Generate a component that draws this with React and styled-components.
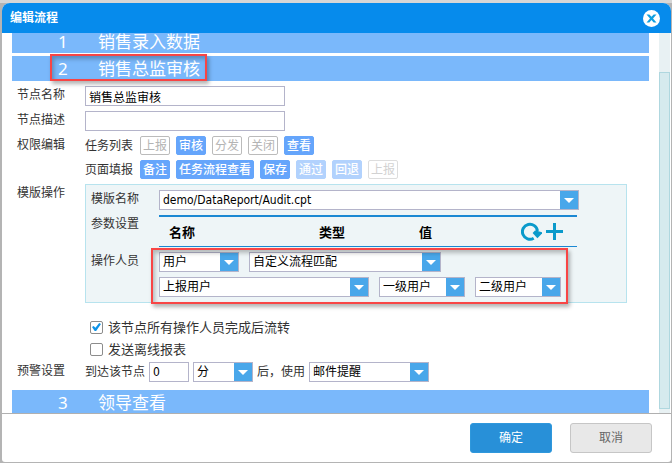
import React from 'react'
import styled, { createGlobalStyle } from 'styled-components'

const GlobalStyle = createGlobalStyle`
*, *::before, *::after{
  box-sizing: border-box;
}
body{
  margin: 0;
  background: #b4b4b4;
  color: #333;
  font-family: "Noto Sans", "Noto Sans CJK SC", sans-serif;
  font-size: 12px;
  line-height: 18px;
}
button, input, select{
  margin: 0;
  font: inherit;
}
`

const Page = styled.div`
height: 100vh;
padding: 3px 1px 1px 2px;
background: linear-gradient(#d6d6d6 3px, #b4b4b4 3px);
`
const Dialog = styled.section`
height: 100%;
display: flex;
flex-direction: column;
overflow: hidden;
border-radius: 8px 8px 3px 3px;
background: #fff;
`
const Header = styled.header`
flex: none;
height: 30px;
padding: 0 11px 0 8px;
display: flex;
align-items: center;
justify-content: space-between;
background: #068bec;
color: #fff;
`
const Title = styled.h1`
margin: 0;
font-size: 12px;
font-weight: 700;
`
const IconButton = styled.button`
padding: 0;
border: 0;
display: flex;
background: none;
cursor: pointer;
`
const Body = styled.div`
flex: 1;
min-height: 0;
display: flex;
overflow: hidden;
`
const Content = styled.div`
flex: 1;
min-width: 0;
margin: 0 10px;
`
const ScrollTrack = styled.div`
flex: none;
width: 11px;
margin-right: 1px;
padding: 39px 0 4px;
background: #e8f1f3;
`
const ScrollThumb = styled.div`
height: 100%;
border: 1px solid #afd7df;
background: #d6eaee;
`
const Band = styled.h2`
position: relative;
height: ${props => props.$first ? 20 : 25}px;
margin: 0 0 ${props => props.$first ? 3 : 0}px;
padding-left: 46px;
display: flex;
align-items: ${props => props.$first ? 'flex-start' : 'center'};
background: #7ab8fb;
color: #fff;
font-size: 17px;
font-weight: 400;
line-height: ${props => props.$first ? 18 : 24}px;
`
const Step = styled.span`
width: 40px;
`
const Mark = styled.span`
position: absolute;
inset: ${props => props.$inset};
border: 2px solid #f84545;
box-shadow: 2px 3px 4px rgba(0, 0, 0, 0.3), inset 2px 3px 4px rgba(0, 0, 0, 0.25);
pointer-events: none;
`
const Form = styled.form`
padding: 5px 22px 8px 5px;
display: grid;
grid-template-columns: 68px minmax(0, 1fr);
row-gap: 5px;
`
const Label = styled.label`
white-space: nowrap;
`
const Line = styled.div`
display: flex;
align-items: center;
gap: ${props => props.$gap || 4}px;
`
const TextInput = styled.input`
width: ${props => props.$width}px;
height: 20px;
padding: 0 3px;
border: 1px solid #b4b4ca;
border-radius: 0;
background: #fff;
color: #000;
font-family: "DejaVu Sans Condensed", "Noto Sans CJK SC", sans-serif;
outline: none;
`
const TagList = styled.div`
display: flex;
align-items: center;
gap: 6px;
`
const TagName = styled.span`
width: 49px;
`
const tones = {
  on: 'background: #65a5fb; border-color: #65a5fb; color: #fff; font-weight: 500;',
  soft: 'background: #b2d2fd; border-color: #b2d2fd; color: #fff; font-weight: 500;',
  off: 'background: #fff; border-color: #bbb; color: #b4b4b4;',
  faint: 'background: #fff; border-color: #ddd; color: #d2d2d2;',
}
const Tag = styled.button`
height: 19px;
padding: 0 2px;
border: 1px solid;
border-radius: 2px;
line-height: 17px;
cursor: pointer;
${props => tones[props.$tone]}
`
const Panel = styled.div`
padding: 5px 47px 5px 5px;
border: 1px solid #b7e3ee;
background: #eef5f7;
display: grid;
grid-template-columns: 68px minmax(0, 1fr);
row-gap: 5px;
`
const SelectBox = styled.span`
width: ${props => props.$width ? `${props.$width}px` : '100%'};
height: 20px;
display: grid;
grid-template-columns: 1fr 18px;
border: 1px solid #b4b4ca;
background: #fff;
`
const NativeSelect = styled.select`
grid-area: 1 / 1 / 2 / 3;
min-width: 0;
height: 18px;
padding: 0 20px 0 3px;
border: 0;
appearance: none;
background: none;
color: #000;
font-family: "DejaVu Sans Condensed", "Noto Sans CJK SC", sans-serif;
outline: none;
`
const Arrow = styled.span`
grid-area: 1 / 2;
display: grid;
place-items: center;
background: #49a7ea;
pointer-events: none;

&::after{
  content: "";
  border: solid transparent;
  border-width: 5px 5px 0;
  border-top-color: #fff;
}
`
const Params = styled.table`
width: calc(100% - 2px);
height: 32px;
border-collapse: separate;
border-spacing: 0;
border-top: 2px solid #1b88d3;
border-bottom: 1px solid #1b88d3;
table-layout: fixed;
color: #000;

th{
  padding: 0 0 0 10px;
  text-align: left;
  font-size: 13px;
}
th:last-child{
  padding: 0 14px 0 0;
}
`
const Tools = styled.div`
display: flex;
justify-content: flex-end;
gap: 4px;
`
const Operators = styled.div`
position: relative;
display: grid;
row-gap: 5px;
`
const Checks = styled.div`
grid-column: 2;
padding: 8px 0 0 5px;
margin-bottom: -3px;
`
const Check = styled.label`
height: 22px;
display: flex;
align-items: center;
gap: 5px;
font-size: 13px;
`
const CheckInput = styled.input`
appearance: none;
width: 13px;
height: 13px;
border: 1px solid #8c8c8c;
border-radius: 2px;
background: #fff;
display: grid;
place-items: center;

&:checked::after{
  content: "";
  width: 9px;
  height: 8px;
  background: #0d93e8;
  clip-path: polygon(0 50%, 18% 36%, 38% 58%, 80% 0, 100% 14%, 46% 100%, 30% 100%);
}
`
const Footer = styled.footer`
flex: none;
height: 49px;
padding: 0 19px 0 0;
display: flex;
align-items: center;
justify-content: flex-end;
gap: 18px;
border-top: 1px solid #b0b0b0;
`
const Action = styled.button`
width: 82px;
height: 30px;
border: 1px solid ${props => props.$primary ? '#2f98dc' : '#c6c6c6'};
border-radius: 3px;
background: ${props => props.$primary ? '#2890d8' : '#e8e8e8'};
color: ${props => props.$primary ? '#fff' : '#666'};
cursor: pointer;
`

const Select = ({ label, id, value, width }) => (
  <SelectBox $width={width}>
    <NativeSelect id={id} aria-label={label}>
      <option>{value}</option>
    </NativeSelect>
    <Arrow />
  </SelectBox>
)

const Tags = ({ name, items }) => (
  <TagList>
    <TagName>{name}</TagName>
    {items.map(([text, tone]) => (
      <Tag key={text} type="button" $tone={tone}>{text}</Tag>
    ))}
  </TagList>
)

const taskTags = [['上报', 'off'], ['审核', 'on'], ['分发', 'off'], ['关闭', 'off'], ['查看', 'on']]
const pageTags = [['备注', 'on'], ['任务流程查看', 'on'], ['保存', 'on'], ['通过', 'soft'], ['回退', 'soft'], ['上报', 'faint']]

const App = () => {
  return (
    <Page>
      <GlobalStyle />
      <Dialog>
        <Header>
          <Title>编辑流程</Title>
          <IconButton aria-label="关闭">
            <svg width="17" height="17" viewBox="0 0 17 17">
              <circle cx="8.5" cy="8.5" r="8.5" fill="#fff" />
              <path d="M3.5 4.5h2.8l2.2 2.3 2.2-2.3h2.8L10 8.5l3.5 4h-2.8L8.5 10l-2.2 2.5H3.5L7 8.5z" fill="#109fe0" />
            </svg>
          </IconButton>
        </Header>

        <Body>
          <Content>
            <Band $first><Step>1</Step>销售录入数据</Band>
            <Band>
              <Step>2</Step>销售总监审核
              <Mark $inset="-2px auto 0 38px" style={{ width: 157 }} />
            </Band>

            <Form>
              <Label htmlFor="name">节点名称</Label>
              <TextInput id="name" $width={200} defaultValue="销售总监审核" />

              <Label htmlFor="desc">节点描述</Label>
              <TextInput id="desc" $width={200} />

              <Label as="span">权限编辑</Label>
              <Tags name="任务列表" items={taskTags} />
              <span />
              <Tags name="页面填报" items={pageTags} />

              <Label as="span">模版操作</Label>
              <Panel>
                <Label htmlFor="template">模版名称</Label>
                <Select id="template" value="demo/DataReport/Audit.cpt" />

                <Label as="span">参数设置</Label>
                <Params>
                  <colgroup>
                    <col width="150" />
                    <col width="100" />
                    <col width="60" />
                    <col />
                  </colgroup>
                  <thead>
                    <tr>
                      <th>名称</th>
                      <th>类型</th>
                      <th>值</th>
                      <th>
                        <Tools>
                          <IconButton type="button" aria-label="刷新">
                            <svg width="21" height="20" viewBox="0 0 21 20">
                              <path d="M12.7 16.2A7.5 7.5 0 1 1 16.4 9" fill="none" stroke="#0a9acb" strokeWidth="3" />
                              <path d="M11.6 11l2.4-2.6 2.6.6 4.4 1.2v1.4l-4.6 4.6z" fill="#0a9acb" />
                            </svg>
                          </IconButton>
                          <IconButton type="button" aria-label="添加">
                            <svg width="17" height="20" viewBox="0 0 17 20">
                              <path d="M8.5 1v17M0 9.5h17" stroke="#0a9acb" strokeWidth="3" />
                            </svg>
                          </IconButton>
                        </Tools>
                      </th>
                    </tr>
                  </thead>
                </Params>

                <Label as="span">操作人员</Label>
                <Operators>
                  <Line $gap={10}>
                    <Select label="操作人员类型" value="用户" width={80} />
                    <Select label="匹配方式" value="自定义流程匹配" width={192} />
                  </Line>
                  <Line $gap={10}>
                    <Select label="上报用户" value="上报用户" width={210} />
                    <Select label="一级用户" value="一级用户" width={86} />
                    <Select label="二级用户" value="二级用户" width={86} />
                  </Line>
                  <Mark $inset="-4px 11px -7px -8px" />
                </Operators>
              </Panel>

              <Checks>
                <Check>
                  <CheckInput type="checkbox" defaultChecked />
                  该节点所有操作人员完成后流转
                </Check>
                <Check>
                  <CheckInput type="checkbox" />
                  发送离线报表
                </Check>
              </Checks>

              <Label as="span">预警设置</Label>
              <Line>
                <Label htmlFor="delay">到达该节点</Label>
                <TextInput id="delay" $width={40} defaultValue="0" />
                <Select label="时间单位" value="分" width={60} />
                后，使用
                <Select label="提醒方式" value="邮件提醒" width={120} />
              </Line>
            </Form>

            <Band><Step>3</Step>领导查看</Band>
          </Content>
          <ScrollTrack>
            <ScrollThumb />
          </ScrollTrack>
        </Body>

        <Footer>
          <Action type="button" $primary>确定</Action>
          <Action type="button">取消</Action>
        </Footer>
      </Dialog>
    </Page>
  )
}

export default App
